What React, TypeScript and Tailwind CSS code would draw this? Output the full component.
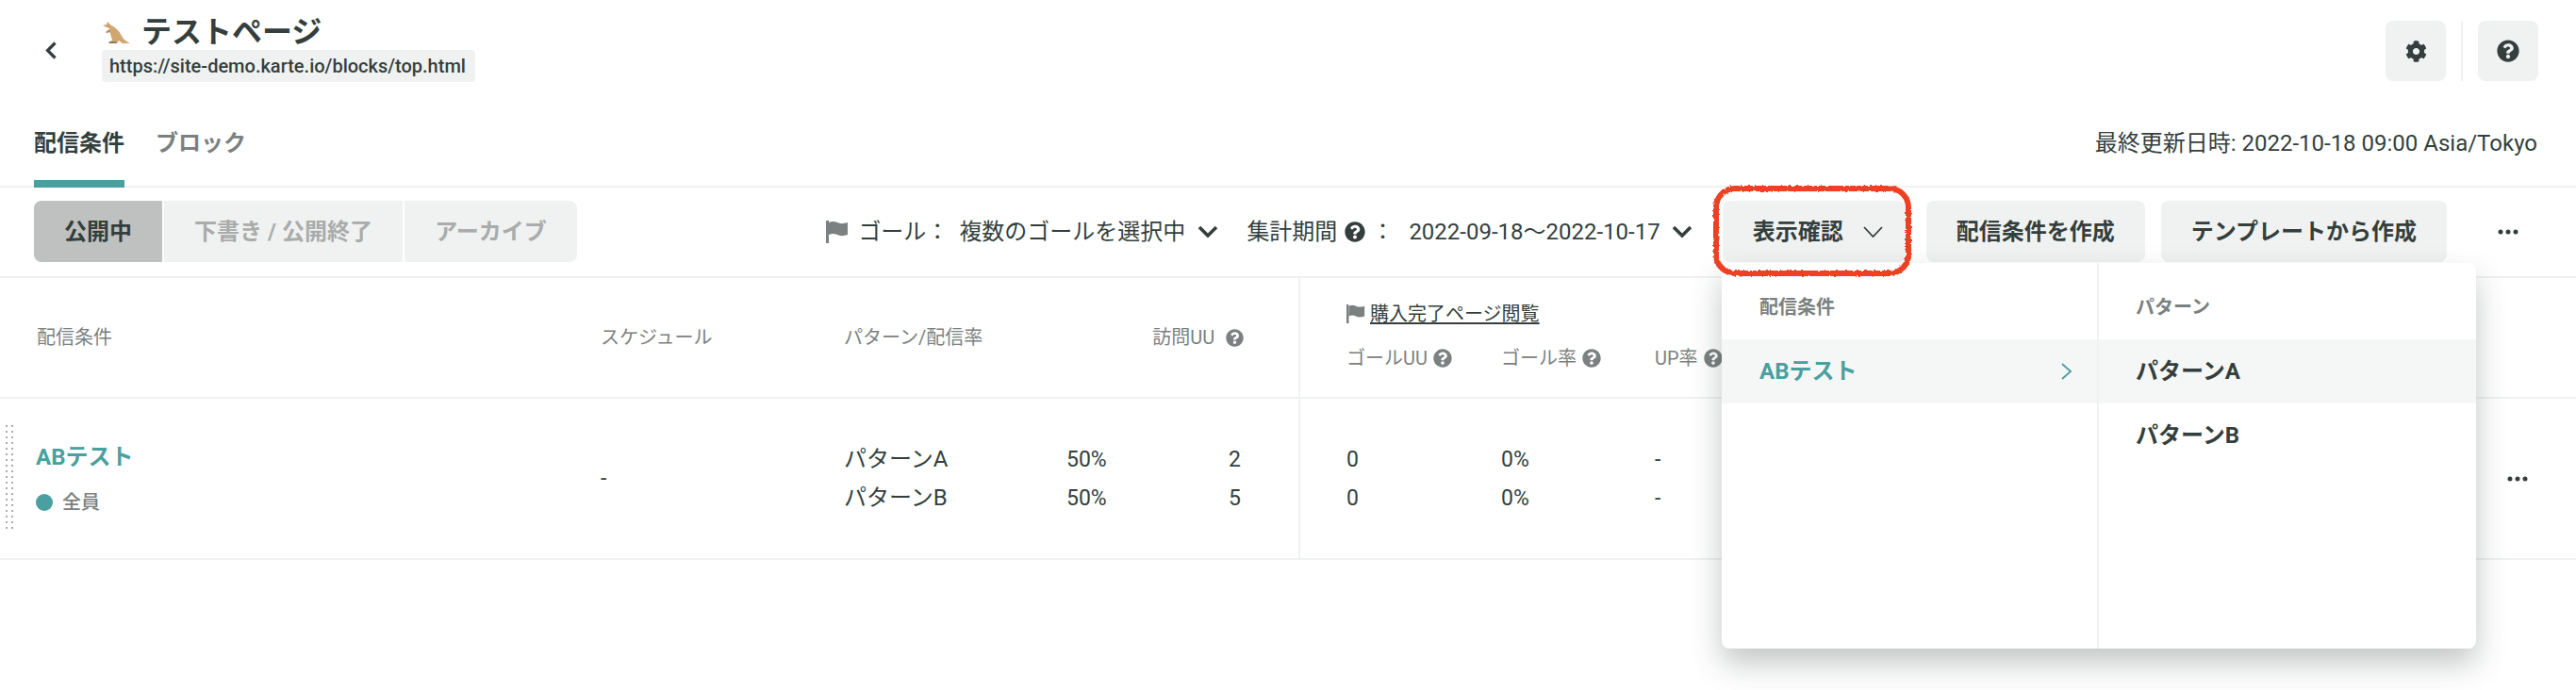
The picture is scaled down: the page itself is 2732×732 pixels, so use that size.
import { FaCog, FaQuestionCircle } from "react-icons/fa";

const border = "border-[#f0f1f1]";

function Flag({ className }: { className: string }) {
  return (
    <svg viewBox="0 0 24 24" className={className} fill="#7b8180">
      <rect x="0" y="0" width="3" height="24" />
      <path d="M3 2c3-1.500 6-1.500 9 0s6 1.500 11 0v13c-5 1.500-8 1.500-11 0s-6-1.500-9 0z" />
    </svg>
  );
}

function Kangaroo() {
  return (
    <svg viewBox="0 0 30 24" className="w-[30px] h-[24px]">
      <path
        d="M1 4L5 3L6 0L8 2L10 4C14 6 19 10 21 15C23 19 26 21 30 23L22 23L18 20L16 23L7 23L8 21L11 20L10 16C9 13 8 10 8 7L5 6Z"
        fill="#d2a670"
      />
      <path d="M8 8L4 11L5 12L9 11Z" fill="#b98a55" />
      <path d="M7 23L16 23L15 21L9 21Z" fill="#8d7a62" />
    </svg>
  );
}

function Dots({ className }: { className: string }) {
  return (
    <svg viewBox="0 0 22 6" className={className} fill="#343f3d">
      <circle cx="3" cy="3" r="2.500" />
      <circle cx="11" cy="3" r="2.500" />
      <circle cx="19" cy="3" r="2.500" />
    </svg>
  );
}

function BoldChevron({ className }: { className: string }) {
  return (
    <svg viewBox="0 0 22 14" className={className} fill="none" stroke="#343f3d" strokeWidth="3.600">
      <path d="M2 2L11 11L20 2" />
    </svg>
  );
}

function GoalHead({ label, width }: { label: string; width: string }) {
  return (
    <div className={`flex items-center gap-[6px] ${width}`}>
      <span className="text-[20px] leading-[28px] text-[#7b8180]">{label}</span>
      <FaQuestionCircle className="w-[20px] h-[20px] text-[#7b8180]" />
    </div>
  );
}

function ActionButton({ label }: { label: string }) {
  return (
    <div className="h-[65px] px-[32px] flex items-center rounded-[8px] bg-[#f0f2f1] text-[24px] font-bold text-[#343f3d]">
      {label}
    </div>
  );
}

function DropdownMenu() {
  return (
    <div className="absolute left-[1826px] top-[279px] w-[800px] h-[409px] flex rounded-[8px] bg-white shadow-[0_16px_32px_rgba(40,50,50,0.28)]">
      <div className={`w-[400px] border-r-2 ${border}`}>
        <div className="h-[81px] pl-[40px] pt-[12px] flex items-center text-[20px] font-bold text-[#7b8180]">配信条件</div>
        <div className="h-[68px] pl-[40px] pr-[26px] flex items-center justify-between bg-[#f5f6f6] text-[24px] font-bold text-[#4a9f9f]">
          ABテスト
          <svg viewBox="0 0 13 18" className="w-[13px] h-[18px]" fill="none" stroke="#4a9f9f" strokeWidth="1.800">
            <path d="M2 1L11 9L2 17" />
          </svg>
        </div>
      </div>
      <div className="flex-1">
        <div className="h-[81px] pl-[39px] pt-[12px] flex items-center text-[20px] font-bold text-[#7b8180]">パターン</div>
        <div className="h-[68px] pl-[39px] flex items-center bg-[#f5f6f6] text-[24px] font-bold text-[#343f3d]">パターンA</div>
        <div className="h-[68px] pl-[39px] flex items-center text-[24px] font-bold text-[#343f3d]">パターンB</div>
      </div>
    </div>
  );
}

// hand drawn marker ring laid over the screenshot
function RedRing() {
  return (
    <svg className="absolute left-[1814px] top-[194px] w-[216px] h-[102px]" viewBox="0 0 216 102" fill="none">
      <filter id="rough" x="-5%" y="-10%" width="110%" height="120%">
        <feTurbulence type="fractalNoise" baseFrequency="0.35" numOctaves="2" seed="3" />
        <feDisplacementMap in="SourceGraphic" scale="3.500" />
      </filter>
      <rect x="6" y="6" width="204" height="90" rx="20" stroke="#ee4023" strokeWidth="6" filter="url(#rough)" />
    </svg>
  );
}

export default function App() {
  return (
    <div className="relative w-[2732px] h-[732px] overflow-hidden bg-white text-[#343f3d] font-['Roboto','Noto_Sans_CJK_JP',sans-serif]">
      {/* page header */}
      <header className="h-[108px] pt-[17px] pl-[48px] pr-[40px] flex items-start">
        <svg viewBox="0 0 12 19" className="mt-[27px] w-[12px] h-[19px]" fill="none" stroke="#343f3d" strokeWidth="3.200">
          <path d="M10.500 1.500L2.500 9.500L10.500 17.500" />
        </svg>
        <div className="ml-[48px]">
          <div className="h-[35px] flex items-center gap-[12px] text-[32px] font-bold leading-[35px]">
            <Kangaroo />
            テストページ
          </div>
          <div className="mt-[1px] w-[396px] h-[34px] px-[8px] flex items-center rounded-[4px] bg-[#f0f2f1] text-[20px] font-medium whitespace-nowrap">
            https://site-demo.karte.io/blocks/top.html
          </div>
        </div>
        <div className="ml-auto mt-[5px] flex items-center">
          <div className="w-[64px] h-[64px] flex items-center justify-center rounded-[8px] bg-[#f0f2f1]">
            <FaCog className="w-[23px] h-[23px]" />
          </div>
          <div className="w-[2px] h-[64px] mx-[16px] bg-[#f0f1f1]" />
          <div className="w-[64px] h-[64px] flex items-center justify-center rounded-[8px] bg-[#f0f2f1]">
            <FaQuestionCircle className="w-[24px] h-[24px]" />
          </div>
        </div>
      </header>

      {/* tabs */}
      <nav className={`h-[91px] pl-[36px] pr-[41px] flex items-start border-b-2 ${border}`}>
        <div className="h-[91px] w-[96px] pt-[30px] border-b-8 border-[#4a9f9f] text-[24px] leading-[28px] font-bold">配信条件</div>
        <div className="ml-[33px] pt-[30px] text-[24px] leading-[28px] font-bold text-[#7b8180]">ブロック</div>
        <div className="ml-auto pt-[30px] text-[24px] leading-[28px]">最終更新日時: 2022-10-18 09:00 Asia/Tokyo</div>
      </nav>

      {/* toolbar */}
      <div className={`h-[96px] pl-[36px] pr-[61px] pt-[14px] flex items-start border-b-2 ${border}`}>
        <div className="h-[65px] flex gap-[2px] text-[24px] font-bold">
          <div className="w-[136px] flex items-center justify-center rounded-l-[8px] bg-[#bfc1c0]">公開中</div>
          <div className="w-[253px] flex items-center justify-center bg-[#f0f2f1] text-[#a8acab]">下書き / 公開終了</div>
          <div className="w-[183px] flex items-center justify-center rounded-r-[8px] bg-[#f0f2f1] text-[#a8acab]">アーカイブ</div>
        </div>

        <div className="ml-auto h-[65px] flex items-center text-[24px] whitespace-nowrap">
          <Flag className="w-[24px] h-[24px]" />
          <span className="ml-[10px]">ゴール：</span>
          <span className="ml-[11px]">複数のゴールを選択中</span>
          <BoldChevron className="ml-[13px] w-[22px] h-[14px]" />
          <span className="ml-[30px]">集計期間</span>
          <FaQuestionCircle className="ml-[8px] w-[22px] h-[22px]" />
          <span className="ml-[6px]">：</span>
          <span className="ml-[16px]">2022-09-18〜2022-10-17</span>
          <BoldChevron className="ml-[12px] w-[22px] h-[14px]" />
          <div className="ml-[32px] h-[65px] w-[194px] pl-[32px] flex items-center rounded-[8px] bg-[#f0f2f1] font-bold">
            表示確認
            <svg viewBox="0 0 21 12" className="ml-[21px] w-[21px] h-[12px]" fill="none" stroke="#343f3d" strokeWidth="1.800">
              <path d="M1 1L10.500 11L20 1" />
            </svg>
          </div>
          <div className="ml-[22px]">
            <ActionButton label="配信条件を作成" />
          </div>
          <div className="ml-[17px]">
            <ActionButton label="テンプレートから作成" />
          </div>
          <Dots className="ml-[54px] w-[22px] h-[6px]" />
        </div>
      </div>

      {/* table head */}
      <div className={`h-[128px] grid grid-cols-[637px_258px_484px_1fr] border-b-2 ${border} text-[20px] text-[#7b8180]`}>
        <div className="pl-[39px] flex items-center">配信条件</div>
        <div className="flex items-center">スケジュール</div>
        <div className={`flex items-center border-r-2 ${border}`}>
          パターン/配信率
          <span className="ml-[180px]">訪問UU</span>
          <FaQuestionCircle className="ml-[12px] w-[19px] h-[19px]" />
        </div>
        <div className="pl-[49px] pt-[24px]">
          <div className="h-[28px] flex items-center text-[#343f3d]">
            <Flag className="w-[20px] h-[20px]" />
            <span className="ml-[5px] underline underline-offset-2">購入完了ページ閲覧</span>
          </div>
          <div className="mt-[19px] flex items-center">
            <GoalHead label="ゴールUU" width="w-[164px]" />
            <GoalHead label="ゴール率" width="w-[163px]" />
            <GoalHead label="UP率" width="w-[80px]" />
          </div>
        </div>
      </div>

      {/* table row */}
      <div className={`h-[171px] grid grid-cols-[637px_258px_484px_1fr] border-b-2 ${border} text-[23px] leading-[41px]`}>
        <div className="pl-[38px] pt-[1px] flex items-center relative">
          <div className="absolute left-[4px] top-[26px] h-[116px] w-[12px] bg-[radial-gradient(circle,#a8acab_1.200px,transparent_1.500px)] bg-size-[6px_6px]" />
          <div>
            <div className="text-[24px] leading-[32px] font-bold text-[#4a9f9f]">ABテスト</div>
            <div className="mt-[18px] flex items-center gap-[10px] text-[20px] leading-[28px] font-medium text-[#7b8180]">
              <span className="w-[18px] h-[18px] rounded-full bg-[#4a9f9f]" />
              全員
            </div>
          </div>
        </div>
        <div className="flex items-center">-</div>
        <div className={`flex flex-col justify-center border-r-2 ${border} pr-[61px]`}>
          <div className="flex">
            <span className="w-[236px] text-[24px]">パターンA</span>
            <span>50%</span>
            <span className="ml-auto">2</span>
          </div>
          <div className="flex">
            <span className="w-[236px] text-[24px]">パターンB</span>
            <span>50%</span>
            <span className="ml-auto">5</span>
          </div>
        </div>
        <div className="pl-[49px] flex items-center">
          <div className="grid grid-cols-[164px_163px_80px]">
            <span>0</span>
            <span>0%</span>
            <span>-</span>
            <span>0</span>
            <span>0%</span>
            <span>-</span>
          </div>
          <Dots className="ml-auto mr-[51px] w-[22px] h-[6px]" />
        </div>
      </div>

      <DropdownMenu />
      <RedRing />
    </div>
  );
}
